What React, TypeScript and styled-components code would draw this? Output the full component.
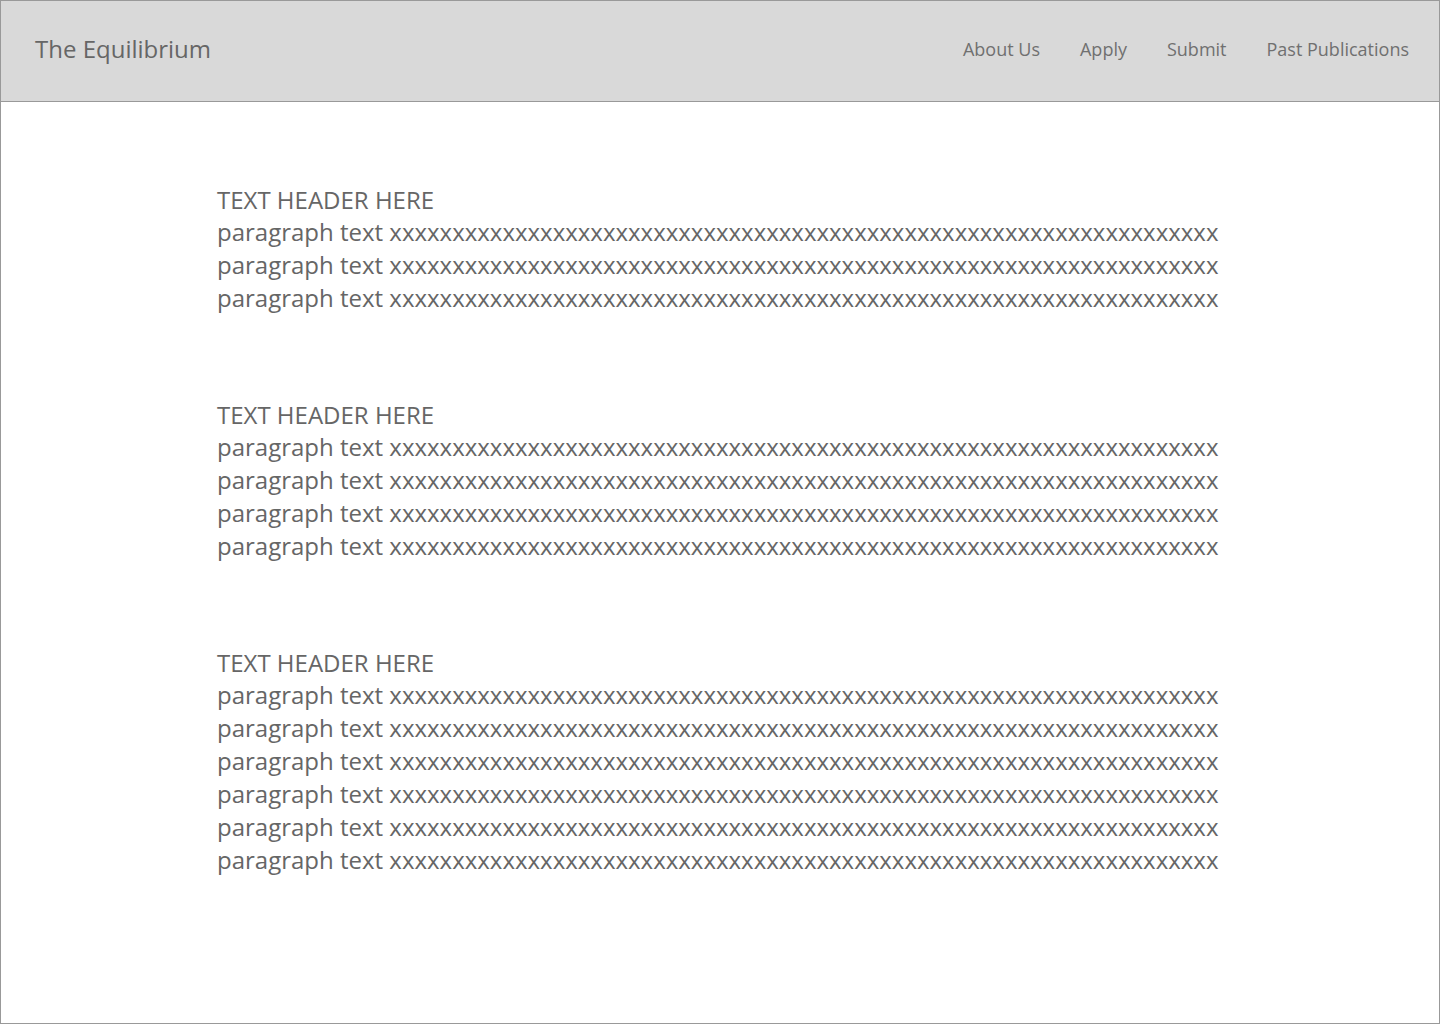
import styled, { createGlobalStyle } from "styled-components";

const GlobalStyle = createGlobalStyle`
  html, body {
    margin: 0;
    padding: 0;
    background: #ffffff;
  }
  * {
    box-sizing: border-box;
  }
`;

const filler = "x".repeat(66);

const sections = [
  { title: "TEXT HEADER HERE", lines: 3 },
  { title: "TEXT HEADER HERE", lines: 4 },
  { title: "TEXT HEADER HERE", lines: 6 },
];

const navLinks = ["About Us", "Apply", "Submit", "Past Publications"];

function App() {
  return (
    <Frame>
      <GlobalStyle />
      <TopBar>
        <Logo>The Equilibrium</Logo>
        <Nav>
          {navLinks.map((link) => (
            <NavLink key={link} href="#">
              {link}
            </NavLink>
          ))}
        </Nav>
      </TopBar>
      <Content>
        {sections.map((section, i) => (
          <Section key={i}>
            <SectionTitle>{section.title}</SectionTitle>
            {Array.from({ length: section.lines }).map((_, j) => (
              <Paragraph key={j}>paragraph text {filler}</Paragraph>
            ))}
          </Section>
        ))}
      </Content>
    </Frame>
  );
}

const Frame = styled.div`
  width: 1440px;
  height: 1024px;
  border: 1px solid #999999;
  background: #ffffff;
  font-family: "Open Sans", "Liberation Sans", sans-serif;
  color: #666666;
  overflow: hidden;
`;

const TopBar = styled.header`
  height: 101px;
  background: #d9d9d9;
  border-bottom: 1px solid #999999;
  display: flex;
  align-items: center;
  justify-content: space-between;
  padding: 0 30px 5px 34px;
`;

const Logo = styled.div`
  font-size: 24px;
  color: #666666;
`;

const Nav = styled.nav`
  display: flex;
  gap: 40px;
`;

const NavLink = styled.a`
  font-size: 18px;
  color: #707070;
  text-decoration: none;
`;

const Content = styled.main`
  padding: 81px 0 0 216px;
  display: flex;
  flex-direction: column;
  gap: 84px;
`;

const Section = styled.section`
  display: flex;
  flex-direction: column;
`;

const SectionTitle = styled.h2`
  margin: 0 0 -1px;
  font-size: 24px;
  font-weight: 400;
  line-height: 33px;
  color: #666666;
`;

const Paragraph = styled.p`
  margin: 0;
  font-size: 24px;
  line-height: 33px;
  color: #666666;
  white-space: nowrap;
`;

export default App;
